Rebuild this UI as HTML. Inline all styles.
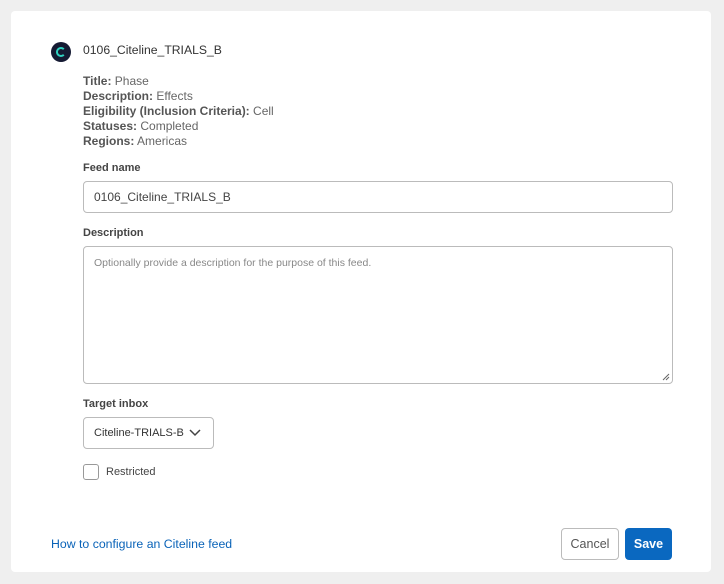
<!DOCTYPE html>
<html><head><style>
*{box-sizing:border-box}
body{margin:0;width:724px;height:584px;background:#efefef;font-family:"Liberation Sans",sans-serif;color:#333;position:relative;overflow:hidden}
.card{position:absolute;left:11px;top:11px;width:700px;height:561px;background:#fff;border-radius:4px}
.a{position:absolute}
.logo{left:51px;top:42px;width:20px;height:20px;border-radius:50%;background:#151a33}
.meta{left:83px;top:74px;font-size:12px;line-height:15px;color:#666}
.meta b{color:#555}
.lbl{font-size:11px;font-weight:bold;color:#444}
.inp{border:1px solid #bbb;border-radius:4px;background:#fff}
</style></head><body>
<div class="card"></div>
<div class="a logo"><svg width="20" height="20"><path d="M12.8 7.2A4 4 0 1 0 12.8 12.8" stroke="#2fd0c0" stroke-width="2" fill="none"/></svg></div>
<div class="a" style="left:83px;top:43px;font-size:12.2px;color:#333">0106_Citeline_TRIALS_B</div>
<div class="a meta"><b>Title:</b> Phase<br><b>Description:</b> Effects<br><b>Eligibility (Inclusion Criteria):</b> Cell<br><b>Statuses:</b> Completed<br><b>Regions:</b> Americas</div>
<div class="a lbl" style="left:83px;top:162px">Feed name</div>
<div class="a inp" style="left:83px;top:181px;width:590px;height:32px;font-size:12px;padding:8px 10px;color:#444">0106_Citeline_TRIALS_B</div>
<div class="a lbl" style="left:83px;top:227px">Description</div>
<div class="a inp" style="left:83px;top:246px;width:590px;height:138px;font-size:10.5px;padding:10px;color:#888">Optionally provide a description for the purpose of this feed.
<svg class="a" style="right:2px;bottom:2px" width="8" height="8"><path d="M1 7L7 1M4 7L7 4" stroke="#666"/></svg></div>
<div class="a lbl" style="left:83px;top:398px">Target inbox</div>
<div class="a inp" style="left:83px;top:417px;width:131px;height:32px;font-size:11px;padding:9px 10px;color:#333">Citeline-TRIALS-B
<svg class="a" style="left:105px;top:11px" width="12" height="8"><path d="M1 1L6 6L11 1" stroke="#444" stroke-width="1.5" fill="none"/></svg></div>
<div class="a inp" style="left:83px;top:464px;width:16px;height:16px;border-color:#999;border-radius:3px"></div>
<div class="a" style="left:106px;top:466px;font-size:11px;color:#444">Restricted</div>
<div class="a" style="left:51px;top:537px;font-size:12.3px;color:#0a63b8">How to configure an Citeline feed</div>
<div class="a inp" style="left:561px;top:528px;width:58px;height:32px;font-size:12.5px;text-align:center;line-height:30px;color:#555">Cancel</div>
<div class="a" style="left:625px;top:528px;width:47px;height:32px;border-radius:4px;background:#0a68c0;color:#fff;font-size:12.5px;font-weight:bold;text-align:center;line-height:32px">Save</div>
</body></html>
